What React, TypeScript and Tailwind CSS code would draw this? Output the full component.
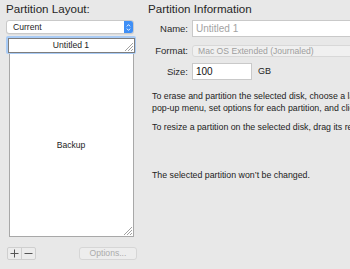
const Grip = () => (
  <svg width="9" height="9" viewBox="0 0 9 9" className="absolute right-[1px] bottom-[1px]">
    <path d="M9 1 L1 9 M9 4 L4 9 M9 7 L7 9" stroke="#8a8a8a" strokeWidth="0.8" />
  </svg>
);

const Label = ({ children }: { children: React.ReactNode }) => (
  <span className="w-[44px] pr-[4px] text-right text-[9.5px] leading-[12px] text-[#2a2a2a]">{children}</span>
);

export default function App() {
  return (
    <div className="flex h-[269px] w-[350px] overflow-hidden bg-[#e8e8e8] font-['Liberation_Sans',Arial,sans-serif] text-[#1e1e1e]">
      {/* left: layout map */}
      <div className="flex w-[148px] shrink-0 flex-col pl-[6px] pt-[2px]">
        <div className="h-[14px] text-[11.6px] leading-[14px] text-[#262626]">Partition Layout:</div>

        <div className="mt-[4px] flex h-[14px] w-[128px] items-stretch overflow-hidden rounded-[3px] border border-[#c9c9c9] bg-white shadow-[0_0.5px_0.5px_rgba(0,0,0,0.08)]">
          <span className="flex-1 pl-[6px] text-[8.6px] leading-[12px]">Current</span>
          <span className="flex w-[9px] items-center justify-center bg-[#3f8ff6]">
            <svg width="5" height="9" viewBox="0 0 5 9">
              <path d="M0.8 3.4 L2.5 1.6 L4.2 3.4 M0.8 5.6 L2.5 7.4 L4.2 5.6" stroke="#fff" strokeWidth="0.9" fill="none" />
            </svg>
          </span>
        </div>

        <div className="mt-[2px] flex w-[130px] flex-col">
          <div className="rounded-[2px] bg-[#a9cbf5] p-[1.5px]">
            <div className="relative flex h-[15px] items-center justify-center border border-[#7d7d7d] bg-white text-[8.6px]">
              Untitled 1
              <Grip />
            </div>
          </div>
          <div className="relative mx-[2.5px] flex h-[183px] items-center justify-center border-x border-b border-[#a8a8a8] bg-white text-[8.6px]">
            Backup
            <Grip />
          </div>
        </div>

        <div className="mt-[10px] flex items-center">
          <div className="ml-[1px] flex h-[13px] w-[29px] rounded-[2px] border border-[#cfcfcf] bg-[#ececec]">
            <span className="flex flex-1 items-center justify-center border-r border-[#cfcfcf]">
              <svg width="9" height="9" viewBox="0 0 9 9">
                <path d="M4.5 0.5 V8.5 M0.5 4.5 H8.5" stroke="#555" strokeWidth="1" />
              </svg>
            </span>
            <span className="flex flex-1 items-center justify-center">
              <svg width="9" height="9" viewBox="0 0 9 9">
                <path d="M0.5 4.5 H8.5" stroke="#555" strokeWidth="1" />
              </svg>
            </span>
          </div>
          <div className="ml-[43px] flex h-[13px] w-[58px] items-center justify-center rounded-[3px] border border-[#d6d6d6] bg-[#ededed] text-[8.6px] text-[#ababab]">
            Options...
          </div>
        </div>
      </div>

      {/* right: partition information */}
      <div className="flex flex-1 flex-col pt-[2px] whitespace-nowrap">
        <div className="h-[14px] text-[11.6px] leading-[14px] text-[#262626]">Partition Information</div>

        <div className="mt-[4px] flex items-center">
          <Label>Name:</Label>
          <div className="flex h-[17px] flex-1 items-center border border-[#c9c9c9] bg-white pl-[3px] text-[10px] text-[#a3a3a3]">
            Untitled 1
          </div>
        </div>

        <div className="mt-[8px] flex items-center">
          <Label>Format:</Label>
          <div className="flex h-[12px] flex-1 items-center rounded-l-[3px] border border-[#d8d8d8] bg-[#f0f0f0] pl-[5px] text-[8.6px] text-[#9e9e9e]">
            Mac OS Extended (Journaled)
          </div>
        </div>

        <div className="mt-[6px] flex items-center">
          <Label>Size:</Label>
          <div className="flex h-[17px] w-[60px] items-center border border-[#c9c9c9] bg-white pl-[3px] text-[10px] text-[#111]">
            100
          </div>
          <span className="ml-[6px] text-[9px]">GB</span>
        </div>

        <div className="mt-[10px] pl-[4px] text-[8.8px] leading-[12px] text-[#222]">
          <div>To erase and partition the selected disk, choose a layout from the Partition Layout</div>
          <div>pop-up menu, set options for each partition, and click Apply.</div>
          <div className="mt-[7px]">To resize a partition on the selected disk, drag its resize control</div>
          <div className="mt-[36px]">The selected partition won’t be changed.</div>
        </div>
      </div>
    </div>
  );
}
